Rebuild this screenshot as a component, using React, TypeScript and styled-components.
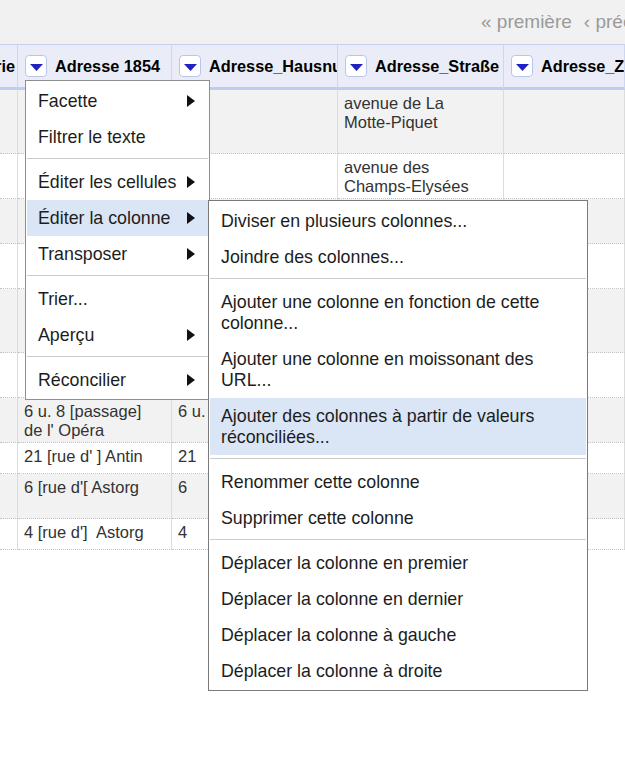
import React from "react";
import styled, { createGlobalStyle } from "styled-components";

const GlobalStyle = createGlobalStyle`
  html, body {
    margin: 0;
    padding: 0;
    background: #fff;
  }
  body {
    font-family: "Liberation Sans", Arial, sans-serif;
  }
  * {
    box-sizing: border-box;
  }
`;

const Page = styled.div`
  position: relative;
  width: 625px;
  height: 762px;
  overflow: hidden;
  background: #fff;
`;

const TopBar = styled.div`
  height: 44px;
  background: #f1f1f1;
  display: flex;
  justify-content: flex-end;
  align-items: center;
`;

const Pager = styled.div`
  flex: 0 0 144px;
  display: flex;
  gap: 12px;
  overflow: hidden;
  white-space: nowrap;
  font-size: 19px;
  color: #9a9a9a;
`;

const Grid = styled.div`
  display: grid;
  grid-template-columns: 18px 154px 166px 166px 1fr;
`;

const HeaderCell = styled.div<{ $end?: boolean }>`
  height: 46px;
  display: flex;
  align-items: center;
  justify-content: ${(p) => (p.$end ? "flex-end" : "flex-start")};
  gap: 8px;
  padding: 0 ${(p) => (p.$end ? "2px" : "0")} 0 ${(p) => (p.$end ? "0" : "7px")};
  background: #eaedf8;
  border-top: 1px solid #c4d0f1;
  border-bottom: 3px solid #bccdf4;
  border-right: 1px solid #cfd7ee;
  overflow: hidden;
  white-space: nowrap;
  font-weight: bold;
  font-size: 16.3px;
  color: #000;
`;

const DropButton = styled.span`
  flex: 0 0 22px;
  height: 22px;
  display: flex;
  align-items: center;
  justify-content: center;
  padding-top: 3px;
  background: #fff;
  border: 1px solid #b7c6ef;
  border-radius: 4px;
`;

const Cell = styled.div<{ $h: number; $odd: boolean }>`
  height: ${(p) => p.$h}px;
  padding: 4px 6px;
  background: ${(p) => (p.$odd ? "#f2f2f2" : "#fff")};
  border-right: 1px solid #dcdcdc;
  border-bottom: 1px dotted #c4c4c4;
  overflow: hidden;
  white-space: pre;
  font-size: 16.5px;
  line-height: 19px;
  color: #333;
`;

const Menu = styled.div`
  position: absolute;
  background: #fff;
  border: 1px solid #8e8e8e;
  padding: 2px 1px 1px;
  font-size: 17.8px;
  color: #1d1d1d;
`;

const MainMenu = styled(Menu)`
  left: 25px;
  top: 80px;
  width: 185px;
`;

const SubMenu = styled(Menu)`
  left: 208px;
  top: 200px;
  width: 380px;
  border-color: #7a7a7a;
`;

const MenuItem = styled.div<{ $active?: boolean }>`
  display: flex;
  align-items: center;
  padding: 7.5px 13px 7.5px 11px;
  line-height: 21px;
  white-space: nowrap;
  background: ${(p) => (p.$active ? "#dae6f6" : "transparent")};
`;

const Arrow = styled.svg`
  margin-left: auto;
  flex-shrink: 0;
`;

const Separator = styled.div`
  height: 1px;
  margin: 3px 0 5px;
  background: #cccccc;
`;

function DownTriangle() {
  return (
    <DropButton>
      <svg width="13" height="7" viewBox="0 0 13 7">
        <polygon points="0,0 13,0 6.5,7" fill="#2222c4" />
      </svg>
    </DropButton>
  );
}

function SubArrow() {
  return (
    <Arrow width="8" height="12" viewBox="0 0 8 12">
      <polygon points="0,0 8,6 0,12" fill="#111" />
    </Arrow>
  );
}

const columns = ["Kategorie", "Adresse 1854", "Adresse_Hausnummer", "Adresse_Straße", "Adresse_Zusatz"];

type Row = { h: number; cells: string[][] };

const rows: Row[] = [
  { h: 64, cells: [[], [], [], ["avenue de La", "Motte-Piquet"], []] },
  { h: 45, cells: [[], [], [], ["avenue des", "Champs-Elysées"], []] },
  { h: 45, cells: [[], [], [], [], []] },
  { h: 45, cells: [[], [], [], [], []] },
  { h: 64, cells: [[], [], [], [], []] },
  { h: 45, cells: [[], [], [], [], []] },
  { h: 45, cells: [[], ["6 u. 8 [passage]", "de l' Opéra"], ["6 u. 8"], [], []] },
  { h: 31, cells: [[], ["21 [rue d' ] Antin"], ["21"], [], []] },
  { h: 45, cells: [[], ["6 [rue d'[ Astorg"], ["6"], [], []] },
  { h: 31, cells: [[], ["4 [rue d']  Astorg"], ["4"], [], []] },
];

type Entry = { label: string[]; sub?: boolean; active?: boolean } | "sep";

const mainEntries: Entry[] = [
  { label: ["Facette"], sub: true },
  { label: ["Filtrer le texte"] },
  "sep",
  { label: ["Éditer les cellules"], sub: true },
  { label: ["Éditer la colonne"], sub: true, active: true },
  { label: ["Transposer"], sub: true },
  "sep",
  { label: ["Trier..."] },
  { label: ["Aperçu"], sub: true },
  "sep",
  { label: ["Réconcilier"], sub: true },
];

const subEntries: Entry[] = [
  { label: ["Diviser en plusieurs colonnes..."] },
  { label: ["Joindre des colonnes..."] },
  "sep",
  { label: ["Ajouter une colonne en fonction de cette", "colonne..."] },
  { label: ["Ajouter une colonne en moissonant des", "URL..."] },
  { label: ["Ajouter des colonnes à partir de valeurs", "réconciliées..."], active: true },
  "sep",
  { label: ["Renommer cette colonne"] },
  { label: ["Supprimer cette colonne"] },
  "sep",
  { label: ["Déplacer la colonne en premier"] },
  { label: ["Déplacer la colonne en dernier"] },
  { label: ["Déplacer la colonne à gauche"] },
  { label: ["Déplacer la colonne à droite"] },
];

function MenuEntries({ entries }: { entries: Entry[] }) {
  return (
    <>
      {entries.map((e, i) =>
        e === "sep" ? (
          <Separator key={i} />
        ) : (
          <MenuItem key={i} $active={e.active}>
            <span>
              {e.label.map((line, j) => (
                <React.Fragment key={j}>
                  {j > 0 && <br />}
                  {line}
                </React.Fragment>
              ))}
            </span>
            {e.sub && <SubArrow />}
          </MenuItem>
        )
      )}
    </>
  );
}

export default function App() {
  return (
    <Page>
      <GlobalStyle />
      <TopBar>
        <Pager>
          <span>« première</span>
          <span>‹ précédent</span>
        </Pager>
      </TopBar>

      <Grid>
        {columns.map((name, i) => (
          <HeaderCell key={name} $end={i === 0}>
            <DownTriangle />
            <span>{name}</span>
          </HeaderCell>
        ))}
        {rows.map((row, r) =>
          row.cells.map((lines, c) => (
            <Cell key={`${r}-${c}`} $h={row.h} $odd={r % 2 === 0}>
              {lines.join("\n")}
            </Cell>
          ))
        )}
      </Grid>

      <MainMenu>
        <MenuEntries entries={mainEntries} />
      </MainMenu>
      <SubMenu>
        <MenuEntries entries={subEntries} />
      </SubMenu>
    </Page>
  );
}
